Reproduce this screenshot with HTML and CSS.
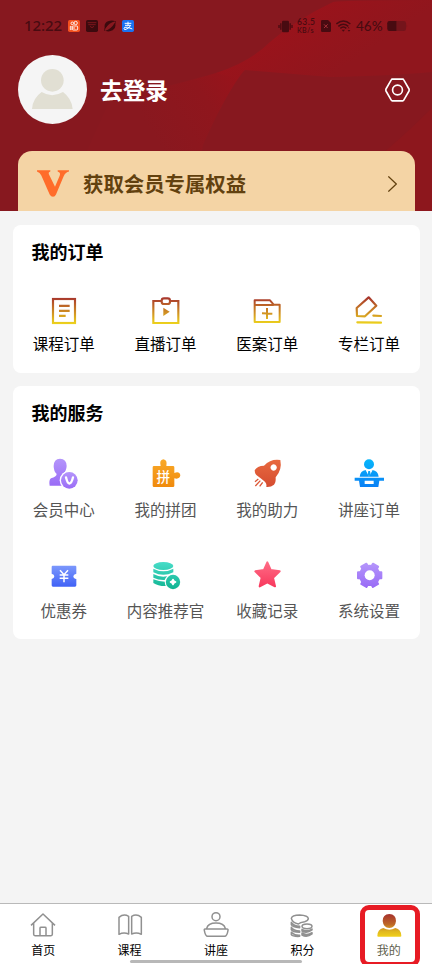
FILE: index.html
```html
<!DOCTYPE html>
<html lang="zh-CN">
<head>
<meta charset="utf-8">
<meta name="viewport" content="width=device-width, initial-scale=1">
<title>我的</title>
<link rel="stylesheet" href="styles.css">
</head>
<body>
<svg class="defs" width="0" height="0" aria-hidden="true">
  <defs>
    <linearGradient id="gold" gradientUnits="userSpaceOnUse" x1="0" y1="50" x2="0" y2="130"><stop offset="0" stop-color="#a5302e"/><stop offset="1" stop-color="#ecd01c"/></linearGradient>
    <linearGradient id="violet" x1="0" y1="0" x2="0" y2="1"><stop offset="0" stop-color="#b495fb"/><stop offset="1" stop-color="#9a6cf6"/></linearGradient>
    <linearGradient id="gear" gradientUnits="userSpaceOnUse" x1="0" y1="353" x2="0" y2="426"><stop offset="0" stop-color="#b495fb"/><stop offset="1" stop-color="#9a6cf6"/></linearGradient>
    <linearGradient id="orange" x1="0" y1="0" x2="0" y2="1"><stop offset="0" stop-color="#f9a928"/><stop offset="1" stop-color="#f08a0c"/></linearGradient>
    <linearGradient id="rust" x1="0" y1="0" x2="0" y2="1"><stop offset="0" stop-color="#e8693f"/><stop offset="1" stop-color="#d54c30"/></linearGradient>
    <linearGradient id="sky" gradientUnits="userSpaceOnUse" x1="0" y1="40" x2="0" y2="126"><stop offset="0" stop-color="#06b8fb"/><stop offset="1" stop-color="#0a80f5"/></linearGradient>
    <linearGradient id="blue" x1="0" y1="0" x2="0" y2="1"><stop offset="0" stop-color="#7c98fc"/><stop offset="1" stop-color="#4062f6"/></linearGradient>
    <linearGradient id="teal" gradientUnits="userSpaceOnUse" x1="0" y1="350" x2="0" y2="430"><stop offset="0" stop-color="#48dcc8"/><stop offset="1" stop-color="#10b492"/></linearGradient>
    <linearGradient id="pink" x1="0" y1="0" x2="0" y2="1"><stop offset="0" stop-color="#ff6b85"/><stop offset="1" stop-color="#f83a5e"/></linearGradient>
    <linearGradient id="mine" gradientUnits="userSpaceOnUse" x1="0" y1="56" x2="0" y2="126"><stop offset="0" stop-color="#a5302e"/><stop offset=".45" stop-color="#bd6626"/><stop offset=".75" stop-color="#dfb61e"/><stop offset="1" stop-color="#f2d21a"/></linearGradient>
    <linearGradient id="ribbon" gradientUnits="userSpaceOnUse" x1="270" y1="30" x2="310" y2="90"><stop offset="0" stop-color="#9a131b"/><stop offset="1" stop-color="#90161d"/></linearGradient>
    <linearGradient id="fold" gradientUnits="userSpaceOnUse" x1="150" y1="130" x2="240" y2="75"><stop offset="0" stop-color="#89181f"/><stop offset=".6" stop-color="#8f161d"/><stop offset="1" stop-color="#99131b"/></linearGradient>
  </defs>
</svg>

<header class="header">
  <svg class="header-art" viewBox="0 0 432 211" aria-hidden="true">
    <path fill="url(#fold)" d="M110 100Q175 85 216 73L245 69Q225 95 203 145L190 211H60Z"/>
    <path fill="url(#ribbon)" d="M333 2Q345 0 432 0V72Q390 76 330 77L245 70L236 78L216 73Q250 62 270 42Q295 20 333 2Z"/>
    <path fill="#8d171d" d="M432 108Q405 135 375 160V211H432Z"/>
  </svg>

  <div class="status">
    <time class="clock">12:22</time>
    <svg class="app" viewBox="0 0 36 36"><rect width="36" height="36" rx="5" fill="#f4511e"/><g fill="none" stroke="#fff" stroke-width="2.6"><circle cx="13" cy="10" r="4"/><circle cx="23" cy="9" r="5"/><rect x="13" y="18" width="16" height="12" rx="3"/><path d="M13 22L7 19V29L13 26M18 21V27"/></g></svg>
    <svg class="app" viewBox="0 0 36 36"><rect width="36" height="36" rx="5" fill="#3c0a0e"/><path d="M5 8H31M7 14H29M12 19Q18 27 24 19" fill="none" stroke="#87181f" stroke-width="2.6"/></svg>
    <svg class="app" viewBox="0 0 36 36"><path fill="#3c0a0e" d="M3 27Q-2 10 12 4Q24 -1 34 4Q15 8 3 27ZM33 8Q38 24 26 31Q14 37 4 32Q20 28 33 8Z"/><path d="M2 33Q-2 26 9 17M34 3Q38 7 30 15" fill="none" stroke="#3c0a0e" stroke-width="2"/></svg>
    <svg class="app" viewBox="0 0 36 36"><rect width="36" height="36" rx="5" fill="#1b72f0"/><path d="M8 10H28M18 5V16M9 16H26Q22 26 9 29Q3 27 8 22Q15 19 31 27" fill="none" stroke="#fff" stroke-width="3"/></svg>
    <div class="status-right">
      <svg class="vibrate" viewBox="0 0 45 39"><rect x="12" y="2" width="21" height="35" rx="4"/><path d="M8.500 10V29M3 15V24M36.500 10V29M42 15V24" fill="none" stroke="#480b11" stroke-width="4"/></svg>
      <div class="speed"><span>63.5</span><span>KB/s</span></div>
      <svg class="sim" viewBox="0 0 30 36"><path d="M4 0H21L30 9V32Q30 36 26 36H4Q0 36 0 32V4Q0 0 4 0Z"/><path d="M9 13L20 24M20 13L9 24" stroke="#a53038" stroke-width="3"/></svg>
      <svg class="wifi" viewBox="0 0 45 36"><g fill="none" stroke="#480b11" stroke-width="4.500"><path d="M1 12Q22 -6 43 12M7 19Q22 6 37 19M13 25Q22 17 31 25"/></g><path d="M17 29H27L22 35ZM35 25L38 21L41 25ZM35 30H43L39 35Z"/></svg>
      <span class="percent">46%</span>
      <svg class="battery" viewBox="0 0 63 31"><rect width="58" height="31" rx="7" fill="#74141b"/><path d="M60 10Q63 15 60 21Z" fill="#74141b"/><path d="M7 0H28V31H7Q0 31 0 24V7Q0 0 7 0Z"/></svg>
    </div>
  </div>

  <div class="profile">
    <svg class="avatar" viewBox="0 0 207 207"><circle cx="103.500" cy="103.500" r="103.500" fill="#f5f5f5"/><g fill="#e1dfd3"><circle cx="103" cy="76" r="34"/><path d="M42 162Q44 130 71 111Q102 130 135 111Q161 130 164 162Z"/></g></svg>
    <h1 class="login">去登录</h1>
    <svg class="settings" viewBox="0 0 76 72" fill="none" stroke="#fff" stroke-width="5" stroke-linejoin="round"><path d="M22 3H54Q56 3 57 5L73 33Q74 36 73 39L57 67Q56 69 54 69H22Q20 69 19 67L3 39Q2 36 3 33L19 5Q20 3 22 3Z"/><circle cx="38" cy="36" r="15"/></svg>
  </div>

  <div class="vip">
    <svg class="vip-mark" viewBox="0 0 96 80"><path fill="#ff6c2a" d="M0 0H40V4Q33 6 36 13L54 50L68 17Q72 7 62 4V0H96V4Q86 6 80 18L57 73Q54 80 48 80Q42 80 38 73L13 16Q9 7 0 4Z"/></svg>
    <span class="vip-text">获取会员专属权益</span>
    <svg class="chevron" viewBox="0 0 26 46"><path d="M1 1L24 23L1 45" fill="none" stroke="#62410f" stroke-width="3.500"/></svg>
  </div>
</header>

<main>
  <section class="card orders">
    <h2>我的订单</h2>
    <div class="grid">
      <div class="item">
        <svg viewBox="144 45 96 96" fill="none" stroke="url(#gold)" stroke-width="6.500"><rect x="159" y="57" width="66" height="72"/><path fill="url(#gold)" stroke="none" d="M177 74H209V81H177ZM177 89H209V96H177ZM177 104H197V111H177Z"/></svg>
        <span>课程订单</span>
      </div>
      <div class="item">
        <svg viewBox="449 45 96 96" fill="none" stroke="url(#gold)" stroke-width="6.500"><path d="M482 63H459V129H534V63H511"/><rect x="484" y="55" width="25" height="17" rx="7"/><path d="M489 83L508 95L489 108Z" fill="url(#gold)" stroke="none"/></svg>
        <span>直播订单</span>
      </div>
      <div class="item">
        <svg viewBox="106 45 96 96" fill="none" stroke="url(#gold)" stroke-width="6" stroke-linejoin="round"><path d="M117 75V61H163L174 74H192V126H117V75H174M154 84V117M139 100L170 101"/></svg>
        <span>医案订单</span>
      </div>
      <div class="item">
        <svg viewBox="411 45 96 96" fill="none" stroke="url(#gold)" stroke-width="6.500" stroke-linejoin="round" stroke-linecap="round"><path d="M458 52L481 77L447 109L423 108L422 84ZM472 107L495 108M424 127L495 128"/></svg>
        <span>专栏订单</span>
      </div>
    </div>
  </section>

  <section class="card services">
    <h2>我的服务</h2>
    <div class="grid">
      <div class="item">
        <svg viewBox="144 36 96 96"><path fill="url(#violet)" d="M180 41Q200 42 200 63Q199 78 191 85Q192 91 203 94V122H149Q146 105 153 100Q169 96 170 87Q161 79 161 63Q161 42 180 41Z"/><circle cx="208" cy="106" r="29" fill="#fff"/><circle cx="208" cy="106" r="25" fill="url(#violet)"/><path d="M198 97Q202 115 208 116Q215 115 219 97" fill="none" stroke="#fff" stroke-width="7" stroke-linecap="round"/></svg>
        <span>会员中心</span>
      </div>
      <div class="item">
        <svg viewBox="449 36 96 96"><path fill="url(#orange)" d="M461 63H481Q476 45 489 43Q502 45 498 63H518Q522 63 522 67V84Q538 78 540 91Q538 104 522 100V122Q522 126 518 126H461Q457 126 457 122V67Q457 63 461 63Z"/><text class="pin" x="489" y="111">拼</text></svg>
        <span>我的拼团</span>
      </div>
      <div class="item">
        <svg viewBox="106 36 96 96"><path fill="url(#rust)" fill-rule="evenodd" d="M194 45Q166 40 145 62Q124 62 117 76Q117 88 126 93L133 98L146 109Q154 116 152 126Q166 127 175 119Q181 113 180 97Q200 74 194 45ZM174 58A9.500 9.500 0 1 1 173.900 58Z"/><path d="M128 102L118 110M134 107L119 123M141 112L132 124" stroke="#dc5736" stroke-width="4"/></svg>
        <span>我的助力</span>
      </div>
      <div class="item">
        <svg viewBox="411 36 96 96"><g fill="url(#sky)"><circle cx="459" cy="58" r="15"/><path d="M449 75L459 88L469 75Q486 77 488 95H431Q433 77 449 75ZM416 98H504V107H490L487 126H432L429 107H416Z"/></g><path fill="#fff" d="M449 75L459 95L470 75L462 78H456ZM446 107H473V117H446Z"/><path fill="#0ca2f8" d="M457 78H462L464 89L459 95L455 89Z"/></svg>
        <span>讲座订单</span>
      </div>
      <div class="item">
        <svg viewBox="144 344 96 96"><path fill="url(#blue)" d="M158 361H226Q229 361 229 365V385Q220 387 220 393Q220 400 229 401V420Q229 424 225 424H159Q155 424 155 420V401Q163 399 163 393Q163 387 155 385V365Q155 361 158 361Z"/><path d="M180 375L192 388L204 375M179 389H205M179 399H205M192 388V411" fill="none" stroke="#fff" stroke-width="4.500"/></svg>
        <span>优惠券</span>
      </div>
      <div class="item">
        <svg viewBox="449 344 96 96"><g fill="url(#teal)"><ellipse cx="489" cy="362" rx="30" ry="12"/><path d="M459 370Q489 386 519 370V381Q489 396 459 381ZM459 386Q489 402 519 386V397Q489 411 459 397ZM459 402Q480 411 502 409V422Q475 424 459 413Z"/></g><circle cx="518" cy="410" r="25" fill="#fff"/><circle cx="518" cy="410" r="21.500" fill="url(#teal)"/><path d="M518 402Q520 408 526 410Q520 412 518 418Q516 412 510 410Q516 408 518 402Z" fill="#fff" stroke="#fff" stroke-width="4" stroke-linejoin="round"/></svg>
        <span>内容推荐官</span>
      </div>
      <div class="item">
        <svg viewBox="106 344 96 96"><path fill="url(#pink)" stroke="url(#pink)" stroke-width="6" stroke-linejoin="round" d="M155 351L165 374L192 378L172 397L178 423L155 411L132 423L138 397L119 378L145 374Z"/></svg>
        <span>收藏记录</span>
      </div>
      <div class="item">
        <svg viewBox="411 344 96 96"><circle cx="461" cy="390" r="32" fill="url(#gear)"/><path fill="url(#gear)" stroke="url(#gear)" stroke-width="6" stroke-linejoin="round" d="M426 381H496V399H426ZM451.300 355.200L486.300 415.800L470.700 424.800L435.700 364.200ZM470.700 355.200L486.300 364.200L451.300 424.800L435.700 415.800Z"/><circle cx="461" cy="390" r="15" fill="#fff"/></svg>
        <span>系统设置</span>
      </div>
    </div>
  </section>
</main>

<nav class="tabs">
  <a class="tab">
    <svg viewBox="82 42 96 96"><path d="M94 91L130 57L166 91M102 85V118Q102 122 106 122H154Q158 122 158 118V85M121 122V99Q121 97 124 97H136Q139 97 139 99V122"/></svg>
    <span>首页</span>
  </a>
  <a class="tab">
    <svg viewBox="341 42 96 96"><path d="M356 67Q370 55 385 64V117Q370 111 356 118ZM394 64Q409 55 423 67V118Q409 111 394 117Z"/></svg>
    <span>课程</span>
  </a>
  <a class="tab">
    <svg viewBox="30 27 96 96"><circle cx="78" cy="50" r="12"/><path d="M50 85Q54 69 78 69Q102 69 106 85M45 87H111Q115 87 114 91Q111 109 104 109H53Q46 109 43 91Q42 87 45 87Z"/></svg>
    <span>讲座</span>
  </a>
  <a class="tab">
    <svg viewBox="289 27 96 96"><path d="M305 55Q307 45 330 45Q355 46 356 56Q355 63 345 65Q331 67 326 72Q308 68 305 55Z"/><ellipse cx="352" cy="79" rx="15" ry="7"/><path d="M305 67Q311 77 330 79V83Q308 81 305 74ZM305 82Q311 92 330 93V97Q308 96 305 89ZM305 97Q315 107 330 106V109Q309 110 305 104ZM337 88Q352 97 367 87V90Q352 101 337 93ZM337 99Q352 108 367 98V102Q352 113 337 105Z"/></svg>
    <span>积分</span>
  </a>
  <a class="tab active">
    <svg viewBox="470 42 96 96"><path fill="url(#mine)" d="M519 57Q539 58 539 78Q537 98 519 99Q501 98 499 78Q499 58 519 57ZM483 123Q483 103 501 99Q519 110 537 99Q555 103 555 123Q555 125 552 125H486Q483 125 483 123Z"/></svg>
    <span>我的</span>
  </a>
  <div class="home-indicator"></div>
</nav>
</body>
</html>
```

FILE: styles.css
```css
*,
*::after {
  box-sizing: border-box;
}

body {
  margin: 0;
  height: 964px;
  display: flex;
  flex-direction: column;
  overflow: hidden;
  background: #f4f4f4;
  color: #000;
  font-family: "Noto Sans CJK SC", sans-serif;
}

svg {
  display: block;
  flex: none;
}

.defs {
  position: absolute;
}

h1,
h2 {
  margin: 0;
}

.header {
  position: relative;
  height: 211px;
  flex: none;
  display: flex;
  flex-direction: column;
  background: #87181f;
}

.header-art {
  position: absolute;
  inset: 0;
  width: 100%;
  height: 100%;
}

.status,
.profile,
.vip {
  position: relative;
  display: flex;
  align-items: center;
}

.status {
  height: 52px;
  padding: 0 24px;
  gap: 6px;
  color: #480b11;
}

.clock {
  width: 38px;
  font: 500 15px/20px "Noto Sans", sans-serif;
  letter-spacing: -0.1px;
  margin-top: -2px;
  white-space: nowrap;
}

.app {
  width: 12px;
  height: 12px;
}

.status-right {
  display: flex;
  align-items: center;
  gap: 5px;
  margin-left: auto;
  fill: #480b11;
}

.vibrate {
  width: 15px;
  height: 13px;
  margin-right: -1px;
}

.speed {
  display: flex;
  flex-direction: column;
  width: 20px;
  margin-right: -1px;
  font: 600 8.500px/8px Lato, sans-serif;
  letter-spacing: 0.4px;
  white-space: nowrap;
}

.speed span + span {
  font-size: 7px;
}

.sim {
  width: 10px;
  height: 12px;
}

.wifi {
  width: 15px;
  height: 12px;
}

.percent {
  width: 26px;
  font: 500 13.500px/18px Lato, sans-serif;
}

.battery {
  width: 21px;
  height: 10px;
}

.profile {
  height: 69px;
  margin-top: 3px;
  padding: 0 22px 0 18px;
}

.avatar {
  width: 69px;
  height: 69px;
}

.login {
  margin-left: 13px;
  color: #fff;
  font-size: 22.700px;
  line-height: 32px;
  font-weight: 700;
}

.settings {
  width: 25px;
  height: 24px;
  margin-left: auto;
}

.vip {
  height: 60px;
  margin: 27px 17px 0 18px;
  padding: 5px 18px 0 19px;
  border-radius: 14px 14px 0 0;
  background: #f4d4a5;
}

.vip-mark {
  width: 32px;
  height: 27px;
}

.vip-text {
  margin: -2px 0 0 14px;
  color: #62410f;
  font-size: 20.400px;
  line-height: 30px;
  font-weight: 700;
}

.chevron {
  width: 9px;
  height: 16px;
  margin-left: auto;
}

main {
  flex: 1;
  display: flex;
  flex-direction: column;
  gap: 13px;
  padding: 14px 12px 0 13px;
}

.card {
  padding-top: 13px;
  border-radius: 8px;
  background: #fff;
}

.orders {
  height: 148px;
}

.services {
  height: 253px;
}

.card h2 {
  margin-left: 18.500px;
  font-size: 18px;
  line-height: 26px;
  font-weight: 700;
}

.grid {
  display: grid;
  grid-template-columns: repeat(4, 1fr);
  padding-top: 31px;
}

.services .grid {
  row-gap: 39.500px;
  padding-top: 32px;
}

.item {
  display: flex;
  flex-direction: column;
  align-items: center;
  font-size: 15.500px;
  line-height: 22px;
  white-space: nowrap;
}

.item svg {
  width: 32px;
  height: 32px;
}

.orders .item span {
  margin-top: 5px;
}

.services .item {
  color: #555;
}

.services .item span {
  margin-top: 9px;
}

.services .item:nth-child(n + 5) span {
  margin-top: 7.500px;
}

.pin {
  fill: #fff;
  font-size: 41px;
  font-weight: 500;
  text-anchor: middle;
}

.tabs {
  position: relative;
  height: 61px;
  flex: none;
  display: grid;
  grid-template-columns: repeat(5, 1fr);
  border-top: 1px solid #b9b9b9;
  background: #fff;
}

.tab {
  display: flex;
  flex-direction: column;
  align-items: center;
  padding-top: 5px;
  font-size: 12px;
  line-height: 18px;
}

.tab svg {
  width: 32px;
  height: 32px;
  fill: none;
  stroke: #909090;
  stroke-width: 4.500;
  stroke-linejoin: round;
}

.active {
  position: relative;
  color: #5e5e4c;
}

.active svg {
  stroke: none;
}

.active::after {
  content: "";
  position: absolute;
  left: 14px;
  top: 1px;
  width: 60px;
  height: 62px;
  border: 5px solid #e71b24;
  border-radius: 9px;
}

.home-indicator {
  position: absolute;
  left: 130px;
  bottom: 1px;
  width: 172px;
  height: 3px;
  border-radius: 2px;
  background: #b8b8b8;
}
```
